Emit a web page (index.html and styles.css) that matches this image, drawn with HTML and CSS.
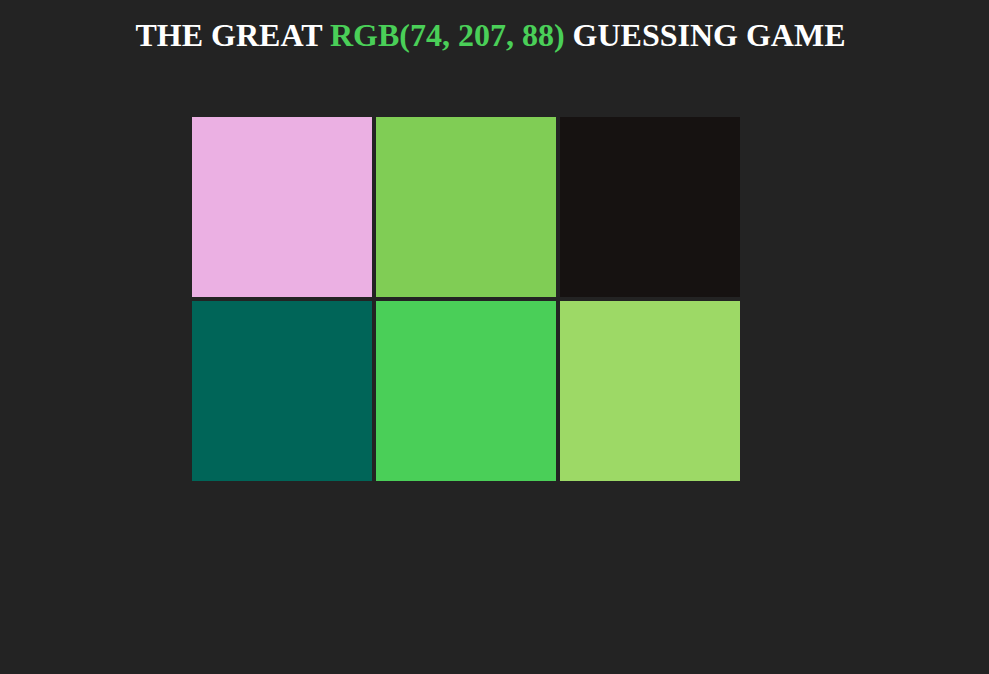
FILE: index.html
```html
<!DOCTYPE html>
<html lang="en">
<head>
    <meta charset="UTF-8">
    <meta name="viewport" content="width=device-width, initial-scale=1.0">
    <title>Color Game</title>
    <link rel="stylesheet" href="styles.css">
</head>
<body>
    <h1 class="title">THE GREAT <span id="colorDisplay">RGB(74, 207, 88)</span> GUESSING GAME</h1>

    <!-- Squares -->
    <div id="container">
        <div class="square" style="background-color: rgb(235, 176, 227);"></div>
        <div class="square" style="background-color: rgb(128, 205, 85);"></div>
        <div class="square" style="background-color: rgb(22, 18, 17);"></div>
        <div class="square" style="background-color: rgb(0, 101, 88);"></div>
        <div class="square" style="background-color: rgb(74, 207, 88);"></div>
        <div class="square" style="background-color: rgb(157, 217, 102);"></div>
    </div>
</body>
</html>
```

FILE: styles.css
```css
body {
    margin: 8px;
    background-color: #232323;
    font-family: "Liberation Serif", "Times New Roman", serif;
}
.title {
    margin: 9px 8px 0 0;
    text-align: center;
    font-size: 32px;
    font-weight: bold;
    color: white;
}
#colorDisplay {
    color: rgb(74, 207, 88);
}
#container {
    display: grid;
    grid-template-columns: repeat(3, 180px);
    grid-auto-rows: 180px;
    gap: 4px;
    width: 548px;
    margin: 63px 0 0 184px;
}
```
